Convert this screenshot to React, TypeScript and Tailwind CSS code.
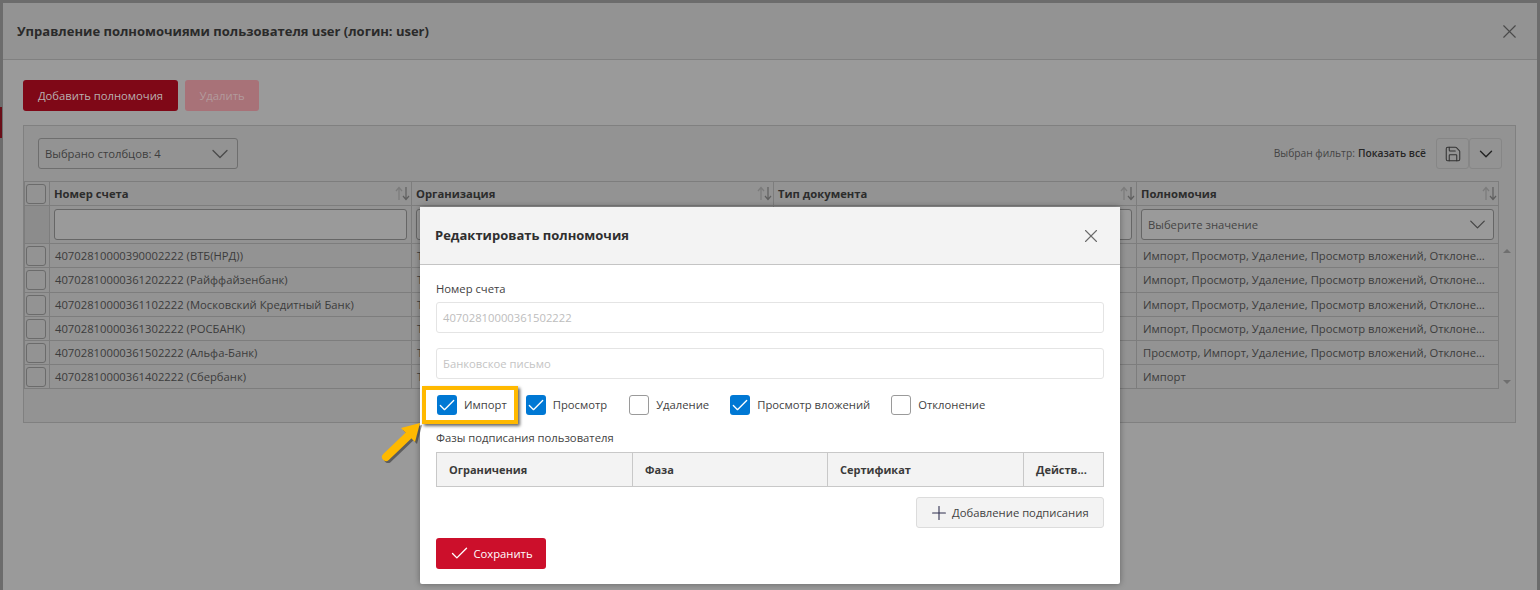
import { Check, ChevronDown, Plus, Save, X } from "lucide-react";

const rows = [
  { account: "40702810000390002222 (ВТБ(НРД))", rights: "Импорт, Просмотр, Удаление, Просмотр вложений, Отклонение", height: "h-[24px]" },
  { account: "40702810000361202222 (Райффайзенбанк)", rights: "Импорт, Просмотр, Удаление, Просмотр вложений, Отклонение", height: "h-[25px]" },
  { account: "40702810000361102222 (Московский Кредитный Банк)", rights: "Импорт, Просмотр, Удаление, Просмотр вложений, Отклонение", height: "h-[24px]" },
  { account: "40702810000361302222 (РОСБАНК)", rights: "Импорт, Просмотр, Удаление, Просмотр вложений, Отклонение", height: "h-[24px]" },
  { account: "40702810000361502222 (Альфа-Банк)", rights: "Просмотр, Импорт, Удаление, Просмотр вложений, Отклонение", height: "h-[24px]" },
  { account: "40702810000361402222 (Сбербанк)", rights: "Импорт", height: "h-[24px]" },
];

const columns = ["Номер счета", "Организация", "Тип документа", "Полномочия"];

function SortIcon() {
  return (
    <svg width="15" height="15" viewBox="0 0 15 15" fill="none" className="shrink-0">
      <path d="M4 14V2M1 5l3-3.500L7 5" stroke="#7b7b7b" strokeWidth="1.200" />
      <path d="M11 1v12M8 10l3 3.500 3-3.500" stroke="#5f5f5f" strokeWidth="1.200" />
    </svg>
  );
}

function DimBox() {
  return <div className="h-5 w-5 rounded-[3px] border border-[#6b6b6b]" />;
}

function CheckField({ label, checked, gap }: { label: string; checked?: boolean; gap: string }) {
  return (
    <div className={`flex items-center gap-[7px] ${gap}`}>
      {checked ? (
        <div className="flex h-5 w-5 items-center justify-center rounded-[3px] bg-[#0078d4]">
          <Check size={21} color="#ffffff" strokeWidth={1.600} />
        </div>
      ) : (
        <div className="h-5 w-5 rounded-[3px] border border-[#9a9a9a] bg-white" />
      )}
      <span className="pt-px text-[11.250px] text-[#424242]">{label}</span>
    </div>
  );
}

function EditDialog() {
  return (
    <div className="absolute left-[420px] top-[207px] flex h-[377px] w-[700px] flex-col rounded-[2px] bg-white shadow-[0_0_6px_rgba(0,0,0,0.35)]">
      <div className="flex h-[58px] shrink-0 items-center justify-between border-b border-[#c4c4c4] bg-[#f3f3f3] pl-[15px] pr-[18px]">
        <h2 className="pt-px text-[13px] font-bold text-[#2f2f2f]">Редактировать полномочия</h2>
        <X size={22} color="#6a6a6a" strokeWidth={1.200} />
      </div>

      <div className="flex flex-1 flex-col px-[16px]">
        <div className="mt-[15px] text-[11.250px] leading-[18px] text-[#424242]">Номер счета</div>
        <div className="mt-[4px] flex h-[31px] items-center rounded-[3px] border border-[#e4e4e4] px-[6px] pt-px text-[11.250px] text-[#bdbdbd]">
          40702810000361502222
        </div>
        <div className="mt-[15px] flex h-[31px] items-center rounded-[3px] border border-[#e4e4e4] px-[6px] pt-px text-[11.250px] text-[#c4c4c4]">
          Банковское письмо
        </div>

        <div className="mt-[16px] flex items-center pl-[1px]">
          <CheckField label="Импорт" checked gap="mr-[19px]" />
          <CheckField label="Просмотр" checked gap="mr-[22px]" />
          <CheckField label="Удаление" gap="mr-[21px]" />
          <CheckField label="Просмотр вложений" checked gap="mr-[21px]" />
          <CheckField label="Отклонение" gap="" />
        </div>

        <div className="mt-[14px] text-[11.250px] leading-[18px] text-[#424242]">Фазы подписания пользователя</div>
        <div className="mt-[5px] grid h-[35px] grid-cols-[195px_195px_196px_1fr] border border-[#c8c8c8] bg-[#f3f3f3] text-[11px] font-bold text-[#3a3a3a]">
          <div className="flex items-center pl-[12px] pt-px">Ограничения</div>
          <div className="flex items-center border-l border-[#c8c8c8] pl-[12px] pt-px">Фаза</div>
          <div className="flex items-center border-l border-[#c8c8c8] pl-[12px] pt-px">Сертификат</div>
          <div className="flex items-center border-l border-[#c8c8c8] pl-[12px] pt-px">Действ...</div>
        </div>

        <div className="mt-[10px] flex justify-end">
          <div className="flex h-[31px] w-[188px] items-center gap-[2px] rounded-[3px] border border-[#dcdcdc] bg-[#f3f3f3] pl-[11px] text-[11.250px] text-[#424242]">
            <Plus size={22} color="#2f2f4f" strokeWidth={1.200} />
            <span className="pt-px">Добавление подписания</span>
          </div>
        </div>

        <div className="mt-[10px] flex h-[31px] w-[110px] items-center justify-center gap-[3px] rounded-[3px] bg-[#cc0f2b] text-[11.250px] text-white">
          <Check size={21} color="#ffffff" strokeWidth={1.600} />
          <span className="pt-px">Сохранить</span>
        </div>
      </div>
    </div>
  );
}

function Callout() {
  return (
    <>
      <div className="absolute left-[422px] top-[386px] h-[38px] w-[96px] border-[4px] border-[#ffb900] shadow-[2px_2px_3px_rgba(0,0,0,0.6)]" />
      <svg className="absolute left-[376px] top-[420px]" width="50" height="50" viewBox="0 0 50 50">
        <g transform="translate(2 2)" opacity="0.5">
          <path d="M10 37L32 16" stroke="#222222" strokeWidth="8" strokeLinecap="round" />
          <path d="M25 8L44 3L39 22Z" fill="#222222" />
        </g>
        <path d="M10 37L32 16" stroke="#ffb900" strokeWidth="8" strokeLinecap="round" />
        <path d="M25 8L44 3L39 22Z" fill="#ffb900" />
      </svg>
    </>
  );
}

export default function App() {
  return (
    <div className="relative h-[590px] w-[1540px] overflow-hidden bg-[#6c6c6c] pl-[3px] pt-[3px] font-['Open_Sans','Noto_Sans',sans-serif] text-[#3c3c3c]">
      <div className="absolute left-0 top-[107px] h-[31px] w-[2px] bg-[#6a0e18]" />
      <div className="flex h-[587px] w-[1534px] flex-col rounded-t-[2px] bg-[#9a9a9a]">
        <div className="flex h-[57px] shrink-0 items-center justify-between border-b border-[#808080] bg-[#939393] pl-[14px] pr-[16px]">
          <h1 className="pt-px text-[13px] font-bold text-[#2a2a2a]">Управление полномочиями пользователя user (логин: user)</h1>
          <X size={23} color="#4a4a4a" strokeWidth={1.200} />
        </div>

        <div className="flex gap-[7px] pl-[20px] pt-[20px]">
          <div className="flex h-[31px] w-[155px] items-center justify-center rounded-[3px] bg-[#7f0817] pt-px text-[11.250px] text-[#b8b0b0]">
            Добавить полномочия
          </div>
          <div className="flex h-[31px] w-[74px] items-center justify-center rounded-[3px] bg-[#a87278] pt-px text-[11.250px] text-[#b29b9d]">
            Удалить
          </div>
        </div>

        <div className="ml-[20px] mt-[14px] flex h-[298px] w-[1493px] flex-col border border-[#808080] bg-[#939393]">
          <div className="flex h-[55px] shrink-0 items-center justify-between pl-[14px] pr-[13px]">
            <div className="flex h-[31px] w-[200px] items-center justify-between rounded-[3px] border border-[#6e6e6e] pl-[6px] pr-[3px] text-[11.250px] text-[#3e3e3e]">
              <span className="pt-px">Выбрано столбцов: 4</span>
              <ChevronDown size={28} color="#4a4a4a" strokeWidth={1.100} />
            </div>
            <div className="flex items-center">
              <span className="text-[10.250px] text-[#444444]">Выбран фильтр: </span>
              <span className="ml-[3px] text-[10.250px] font-semibold text-[#262626]">Показать всё</span>
              <div className="ml-[10px] flex h-[31px] w-[33px] items-center justify-center rounded-[3px] border border-[#868686]">
                <Save size={18} color="#333333" strokeWidth={1.400} />
              </div>
              <div className="flex h-[31px] w-[33px] items-center justify-center rounded-[3px] border border-[#868686]">
                <ChevronDown size={22} color="#222222" strokeWidth={1.500} />
              </div>
            </div>
          </div>

          <div className="flex">
            <div className="w-[1475px] text-[11.250px]">
              <div className="grid h-[25px] grid-cols-[24px_362px_362px_363px_362px] border border-[#7d7d7d] font-bold text-[#2c2c2c]">
                <div className="flex items-center pl-[1px]"><DimBox /></div>
                {columns.map((c) => (
                  <div key={c} className="flex items-center justify-between border-l border-[#7d7d7d] pl-[4px] pr-[1px]">
                    <span className="pt-px">{c}</span>
                    <SortIcon />
                  </div>
                ))}
              </div>
              <div className="grid h-[38px] grid-cols-[24px_362px_362px_363px_362px] border-x border-b border-[#7d7d7d]">
                <div className="bg-[#8c8c8c]" />
                {columns.map((c, i) => (
                  <div key={c} className="flex items-center border-l border-[#7d7d7d] px-[4px]">
                    <div className="flex h-[31px] w-full items-center justify-between rounded-[3px] border border-[#666666] bg-[#9a9a9a] pl-[6px] pr-[2px] text-[#454545]">
                      {i === 3 && <span className="pt-px">Выберите значение</span>}
                      {i === 3 && <ChevronDown size={27} color="#444444" strokeWidth={1.100} />}
                    </div>
                  </div>
                ))}
              </div>
              {rows.map((r) => (
                <div key={r.account} className={`grid ${r.height} grid-cols-[24px_362px_362px_363px_362px] border-x border-b border-[#7d7d7d] text-[#3c3c3c]`}>
                  <div className="flex items-center pl-[1px]"><DimBox /></div>
                  <div className="flex items-center border-l border-[#7d7d7d] pl-[5px] pt-px">{r.account}</div>
                  <div className="flex items-center border-l border-[#7d7d7d] pl-[5px] pt-px">Т</div>
                  <div className="border-l border-[#7d7d7d]" />
                  <div className="flex min-w-0 items-center border-l border-[#7d7d7d] pl-[6px] pr-[9px] pt-px">
                    <span className="truncate">{r.rights}</span>
                  </div>
                </div>
              ))}
            </div>
            <div className="mt-[63px] flex h-[145px] w-[17px] flex-col items-center justify-between px-[3px] py-[5px]">
              <div className="h-0 w-0 border-x-[4px] border-b-[4px] border-x-transparent border-b-[#6f6f6f]" />
              <div className="h-0 w-0 border-x-[4px] border-t-[4px] border-x-transparent border-t-[#6f6f6f]" />
            </div>
          </div>
        </div>
      </div>

      <EditDialog />
      <Callout />
    </div>
  );
}
